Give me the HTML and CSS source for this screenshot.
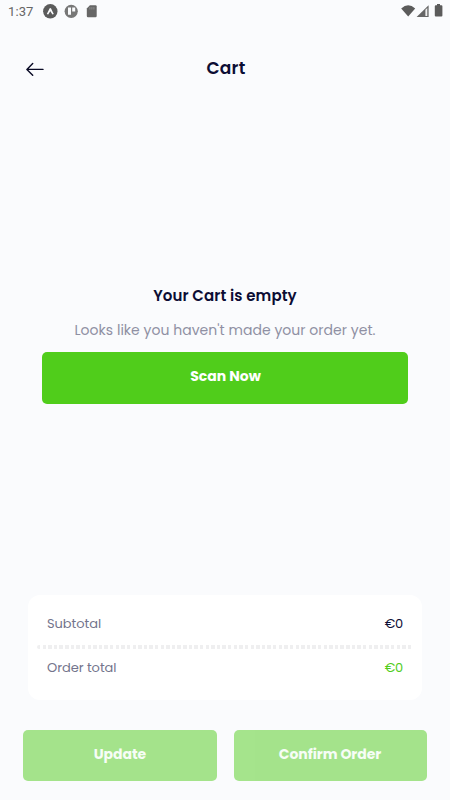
FILE: index.html
```html
<!DOCTYPE html>
<html lang="en">
<head>
<meta charset="utf-8">
<title>Cart</title>
<link rel="stylesheet" href="styles.css">
</head>
<body>
<div class="status">
  <span class="time">1:37</span>
  <svg class="notices" width="56" height="16" viewBox="0 0 56 16">
    <circle cx="7.3" cy="8.3" r="7.2" fill="#5b5b5b"/>
    <path d="M3.8 11.1Q5.8 7.1 6.5 5.5Q7.3 4.3 8.1 5.5Q8.8 7.1 10.8 11.1L9.4 11.5L7.3 8.2L5.2 11.5Z" fill="#fafbfd"/>
    <circle cx="28.2" cy="8.3" r="6.6" fill="#777"/>
    <path d="M25 4.6h3v7.2h-3zM29.2 4.6h3v4h-3z" fill="#fafbfd"/>
    <path d="M46.9 2.3h5.6q1.2 0 1.2 1.2v9.6q0 1.2-1.2 1.2h-7.5q-1.2 0-1.2-1.2V5.5z" fill="#666"/>
    <path d="M46.9 4.1v2.4M48.9 4.1v2.4M50.9 4.1v2.4" stroke="#999" stroke-width=".8"/>
  </svg>
  <svg class="signals" width="44" height="16" viewBox="0 0 44 16">
    <path d="M1.2 5.6Q8.2-1.3 15.2 5.6L8.2 13.4Z" fill="#5b5b5b"/>
    <path d="M16.6 14L28.6 2.3V14z" fill="#666"/>
    <path d="M25.4 6.8L27.3 5V13h-1.9z" fill="#eee"/>
    <path d="M37 1h3v1.2h1.4q1 0 1 1v9.2q0 1-1 1h-5.6q-1 0-1-1V3.2q0-1 1-1H37z" fill="#5b5b5b"/>
  </svg>
</div>
<header class="header">
  <svg class="back" width="18" height="14" viewBox="0 0 18 14"><path d="M17 7.4H1M6.7 1.5L.9 7.4l5.8 5.9" fill="none" stroke="#090a25" stroke-width="1.4" stroke-linecap="round" stroke-linejoin="round"/></svg>
  <h1>Cart</h1>
</header>
<main class="empty">
  <h2>Your Cart is empty</h2>
  <p>Looks like you haven't made your order yet.</p>
  <button class="button">Scan Now</button>
</main>
<section class="summary">
  <div class="row"><span>Subtotal</span><span class="price">€0</span></div>
  <div class="divider"></div>
  <div class="row"><span>Order total</span><span class="price total">€0</span></div>
</section>
<footer class="actions">
  <button class="button" disabled>Update</button>
  <button class="button" disabled>Confirm Order</button>
</footer>
</body>
</html>
```
FILE: styles.css
```css
* { box-sizing: border-box; }
body {
  margin: 0;
  width: 450px;
  height: 800px;
  overflow: hidden;
  display: flex;
  flex-direction: column;
  background: #fafbfd;
  color: #0c0d34;
  font-family: Poppins, Inter, sans-serif;
  white-space: nowrap;
}
h1, h2, p { margin: 0; text-align: center; }
.status { display: flex; height: 24px; padding: 3px 6px 0 8px; color: #666; }
.time { width: 35px; font: 13px/18px Roboto, sans-serif; letter-spacing: .1px; }
.signals { margin-left: auto; }
.header { display: grid; grid-template-columns: 18px 1fr 18px; align-items: center; height: 90px; padding: 0 26px; }
.header h1 { margin-top: -3px; padding-left: 2px; font-size: 17px; line-height: 24px; font-weight: 600; letter-spacing: .3px; }
.empty { display: flex; flex-direction: column; margin: 169px 42px 0; }
h2 { font-size: 15px; line-height: 26px; font-weight: 600; letter-spacing: .1px; }
.empty p { margin-top: 8px; font-size: 14px; line-height: 26px; font-weight: 400; color: #8f90a3; letter-spacing: .03px; }
.button {
  height: 52px;
  padding: 0 0 3px;
  border: 0;
  border-radius: 5px;
  background: #50cd1b;
  color: #fff;
  font: 700 14px/24px Poppins, Inter, sans-serif;
}
.empty .button { margin-top: 9px; padding: 0 0 4px 1px; }
.summary { height: 105px; margin: 191px 28px 0; padding: 13px 9px; border-radius: 12px; background: #fff; }
.row { display: flex; justify-content: space-between; height: 30px; padding: 0 10px; font-size: 13px; line-height: 31px; color: #73748c; letter-spacing: -.05px; }
.price { color: #0c0d34; letter-spacing: -.2px; line-height: 32px; }
.price.total { color: #50cd1b; }
.divider { height: 4px; margin: 7px 0 3px; border-radius: 2px; background: repeating-linear-gradient(90deg, #efeff0 0 3.4px, #fff 3.4px 5.62px); }
.actions { display: grid; grid-template-columns: 1fr 1fr; gap: 17px; padding: 30px 23.4px 0; }
.actions .button { height: 51px; opacity: .5; color: #f4fff0; letter-spacing: -.05px; }
```
